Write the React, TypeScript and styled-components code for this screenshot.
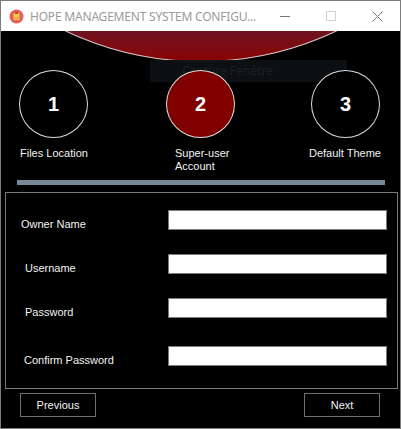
import React from 'react';
import styled, { createGlobalStyle } from 'styled-components';

const GlobalStyle = createGlobalStyle`
  html, body {
    margin: 0;
    padding: 0;
    background: #ffffff;
  }
  * {
    box-sizing: border-box;
  }
`;

type Step = {
  number: number;
  label: string;
  active?: boolean;
  labelShift: number;
};

const steps: Step[] = [
  { number: 1, label: 'Files Location', labelShift: 1 },
  { number: 2, label: 'Super-user\nAccount', active: true, labelShift: 9 },
  { number: 3, label: 'Default Theme', labelShift: -2 },
];

const fields = [
  { label: 'Owner Name', indent: 15, gap: 17 },
  { label: 'Username', indent: 19, gap: 24 },
  { label: 'Password', indent: 19, gap: 24 },
  { label: 'Confirm Password', indent: 18, gap: 28 },
];

const AppIcon = () => (
  <svg width="15" height="15" viewBox="0 0 15 15">
    <circle cx="7.5" cy="7.5" r="7" fill="#e4605c" />
    <rect x="4.5" y="4" width="6" height="7" rx="0.8" fill="#f4c64a" />
    <rect x="6" y="3" width="3" height="2" fill="#c9462f" />
    <rect x="5.5" y="8.5" width="4" height="1" fill="#d98b2b" />
  </svg>
);

export default function App() {
  return (
    <>
      <GlobalStyle />
      <Window>
        <TitleBar>
          <IconSlot>
            <AppIcon />
          </IconSlot>
          <Title>HOPE MANAGEMENT SYSTEM CONFIGU...</Title>
          <Controls>
            <ControlButton>
              <svg width="10" height="10" viewBox="0 0 10 10">
                <line x1="0" y1="5.5" x2="10" y2="5.5" stroke="#777" strokeWidth="1" />
              </svg>
            </ControlButton>
            <ControlButton>
              <svg width="10" height="10" viewBox="0 0 10 10">
                <rect x="0.5" y="0.5" width="9" height="9" fill="none" stroke="#d2d2d2" strokeWidth="1" />
              </svg>
            </ControlButton>
            <ControlButton>
              <svg width="11" height="11" viewBox="0 0 11 11">
                <path d="M0.5 0.5 L10.5 10.5 M10.5 0.5 L0.5 10.5" stroke="#777" strokeWidth="1" />
              </svg>
            </ControlButton>
          </Controls>
        </TitleBar>

        <Content>
          <Banner />
          <Tooltip>Capture Fenêtre</Tooltip>

          <StepsRow>
            {steps.map((step) => (
              <StepItem key={step.number}>
                <StepCircle $active={step.active}>{step.number}</StepCircle>
                <StepLabel $shift={step.labelShift}>{step.label}</StepLabel>
              </StepItem>
            ))}
          </StepsRow>

          <ProgressBar />

          <FormGroup>
            {fields.map((field) => (
              <FieldRow key={field.label} $gap={field.gap}>
                <FieldLabel $indent={field.indent}>{field.label}</FieldLabel>
                <TextInput />
              </FieldRow>
            ))}
          </FormGroup>

          <Footer>
            <NavButton>Previous</NavButton>
            <NavButton>Next</NavButton>
          </Footer>
        </Content>
      </Window>
    </>
  );
}

const Window = styled.div`
  width: 401px;
  height: 429px;
  display: flex;
  flex-direction: column;
  border: 1px solid #7c7c7c;
  background: #000;
  font-family: 'Liberation Sans', Arial, sans-serif;
`;

const TitleBar = styled.div`
  height: 30px;
  flex: none;
  display: flex;
  align-items: center;
  background: #ffffff;
`;

const IconSlot = styled.div`
  width: 29px;
  height: 30px;
  display: flex;
  align-items: center;
  padding-left: 8px;
`;

const Title = styled.div`
  flex: 1;
  font-family: 'Noto Sans', 'Open Sans', sans-serif;
  font-size: 12px;
  color: #9a9a9a;
  white-space: nowrap;
  letter-spacing: -0.2px;
`;

const Controls = styled.div`
  display: flex;
  height: 30px;
`;

const ControlButton = styled.div`
  width: 46px;
  height: 30px;
  display: flex;
  align-items: center;
  justify-content: center;
`;

const Content = styled.div`
  position: relative;
  flex: 1;
  overflow: hidden;
  background: #000;
  display: flex;
  flex-direction: column;
`;

const Banner = styled.div`
  position: absolute;
  left: -116px;
  top: -601px;
  width: 632px;
  height: 632px;
  border-radius: 50%;
  border: 1px solid rgba(235, 235, 235, 0.85);
  background: linear-gradient(
    to bottom,
    #6b1424 0,
    #6b1424 calc(100% - 34px),
    #8a0505 100%
  );
`;

const Tooltip = styled.div`
  position: absolute;
  left: 149px;
  top: 29px;
  width: 197px;
  height: 22px;
  padding-left: 32px;
  background: rgba(13, 17, 19, 0.96);
  color: #1c2022;
  font-family: 'Noto Sans', 'Open Sans', sans-serif;
  font-size: 12px;
  line-height: 22px;
`;

const StepsRow = styled.div`
  position: relative;
  z-index: 1;
  height: 149px;
  padding: 39px 0 0 18px;
  display: grid;
  grid-template-columns: 147px 145px 1fr;
`;

const StepItem = styled.div`
  display: flex;
  flex-direction: column;
`;

const StepCircle = styled.div<{ $active?: boolean }>`
  width: 69px;
  height: 68px;
  border-radius: 50%;
  border: 1px solid #dcdcdc;
  background: ${({ $active }) => ($active ? '#800000' : '#000')};
  color: #ffffff;
  font-family: 'Liberation Sans', Arial, sans-serif;
  font-weight: bold;
  font-size: 20px;
  display: flex;
  align-items: center;
  justify-content: center;
`;

const StepLabel = styled.div<{ $shift: number }>`
  margin-top: 9px;
  margin-left: ${({ $shift }) => $shift}px;
  color: #f2f2f2;
  font-size: 11px;
  line-height: 13px;
  white-space: pre-line;
`;

const ProgressBar = styled.div`
  flex: none;
  height: 5px;
  margin: 0 15px 0 16px;
  background: #778899;
`;

const FormGroup = styled.div`
  flex: none;
  height: 197px;
  margin: 7px 2px 0 4px;
  border: 1px solid #7a7a7a;
  display: flex;
  flex-direction: column;
`;

const FieldRow = styled.div<{ $gap: number }>`
  margin-top: ${({ $gap }) => $gap}px;
  height: 20px;
  display: grid;
  grid-template-columns: 162px 219px;
`;

const FieldLabel = styled.div<{ $indent: number }>`
  padding: 8px 0 0 ${({ $indent }) => $indent}px;
  color: #f2f2f2;
  font-size: 11px;
  line-height: 13px;
  white-space: nowrap;
`;

const TextInput = styled.div`
  height: 20px;
  background: #ffffff;
  border: 1px solid #7a7a7a;
`;

const Footer = styled.div`
  display: flex;
  justify-content: space-between;
  padding: 4px 20px 0 19px;
`;

const NavButton = styled.div`
  width: 76px;
  height: 24px;
  border: 1px solid #6e6e6e;
  color: #f4f4f4;
  font-size: 11px;
  display: flex;
  align-items: center;
  justify-content: center;
`;
